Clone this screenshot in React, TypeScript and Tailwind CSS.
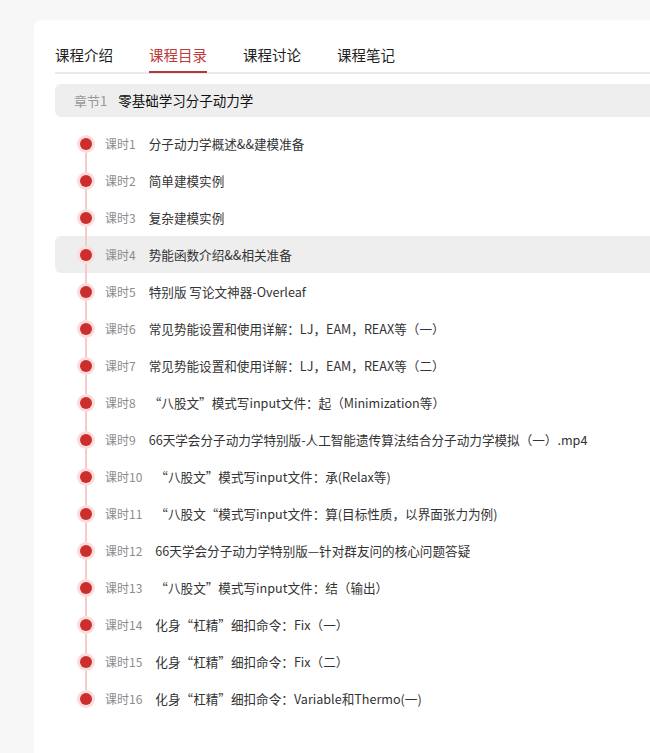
import React from 'react';

const lessons: string[] = [
  '分子动力学概述&&建模准备',
  '简单建模实例',
  '复杂建模实例',
  '势能函数介绍&&相关准备',
  '特别版 写论文神器-Overleaf',
  '常见势能设置和使用详解：LJ，EAM，REAX等（一）',
  '常见势能设置和使用详解：LJ，EAM，REAX等（二）',
  '“八股文”模式写input文件：起（Minimization等）',
  '66天学会分子动力学特别版-人工智能遗传算法结合分子动力学模拟（一）.mp4',
  '“八股文”模式写input文件：承(Relax等)',
  '“八股文“模式写input文件：算(目标性质，以界面张力为例)',
  '66天学会分子动力学特别版—针对群友问的核心问题答疑',
  '“八股文”模式写input文件：结（输出）',
  '化身“杠精”细扣命令：Fix（一）',
  '化身“杠精”细扣命令：Fix（二）',
  '化身“杠精”细扣命令：Variable和Thermo(一)',
];

const tabs = ['课程介绍', '课程目录', '课程讨论', '课程笔记'];

const App: React.FC = () => {
  return (
    <div
      className="min-h-screen w-full overflow-hidden bg-[#f7f7f7] pl-[34px] pt-[20px]"
      style={{ fontFamily: '"Noto Sans CJK SC", "Noto Sans", sans-serif' }}
    >
      <div className="min-h-[733px] rounded-tl-lg bg-white pl-[21px] pt-[24px]">
        {/* 标签栏 */}
        <div className="flex gap-[36px] border-b-2 border-[#e8e8ee]">
          {tabs.map((t) => (
            <div
              key={t}
              className={
                t === '课程目录'
                  ? '-mb-[1px] border-b-2 border-[#b23a3a] pb-[5px] text-[14.5px] leading-[22px] text-[#c0393b]'
                  : '-mb-[1px] border-b-2 border-transparent pb-[5px] text-[14.5px] leading-[22px] text-[#1f1f1f]'
              }
            >
              {t}
            </div>
          ))}
        </div>

        {/* 章节 */}
        <div className="mt-[10px] flex h-[33px] items-center rounded-l-md bg-[#eeeeee] pl-[19px]">
          <span className="mr-[11px] text-[13px] text-[#999]">章节1</span>
          <span className="text-[13.5px] text-[#111]">零基础学习分子动力学</span>
        </div>

        {/* 课时列表 */}
        <div className="mt-[8px]">
          {lessons.map((title, i) => (
            <div
              key={i}
              className={
                i === 3
                  ? 'flex h-[37px] items-center rounded-l-md bg-[#eeeeee]'
                  : 'flex h-[37px] items-center'
              }
            >
              <div className="ml-[22px] flex h-full w-[18px] flex-col items-center">
                <div className={i === 0 ? 'w-[2px] flex-1' : 'w-[2px] flex-1 bg-[#f7caca]'} />
                <div className="flex h-[18px] w-[18px] items-center justify-center rounded-full bg-[#fbdcdc]">
                  <div className="h-[12px] w-[12px] rounded-full bg-[#cc2e2e]" />
                </div>
                <div
                  className={
                    i === lessons.length - 1 ? 'w-[2px] flex-1' : 'w-[2px] flex-1 bg-[#f7caca]'
                  }
                />
              </div>
              <span className="ml-[10px] mr-[13px] whitespace-nowrap text-[12px] leading-[20px] text-[#8c8c8c]">
                课时{i + 1}
              </span>
              <span className="whitespace-nowrap text-[12.6px] leading-[20px] text-[#333]">{title}</span>
            </div>
          ))}
        </div>
      </div>
    </div>
  );
};

export default App;
